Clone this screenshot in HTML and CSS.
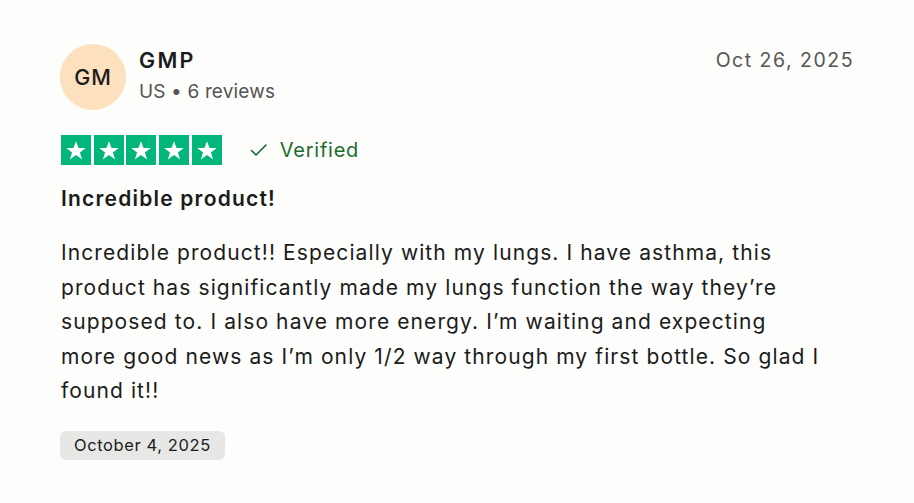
FILE: index.html
```html
<!DOCTYPE html>
<html lang="en">
<head>
<meta charset="utf-8">
<link rel="stylesheet" href="styles.css">
</head>
<body>
<article class="review">
  <header class="head">
    <div class="avatar">GM</div>
    <div class="who">
      <div class="name">GMP</div>
      <div class="meta">US • 6 reviews</div>
    </div>
    <time class="date">Oct 26, 2025</time>
  </header>
  <div class="rating">
    <div class="stars">
      <span class="star"><svg viewBox="0 0 24 24"><path d="M12 3.2l2.55 6.9h7.25l-5.85 4.3 2.2 7-6.15-4.4-6.15 4.4 2.2-7-5.85-4.3h7.25z"/></svg></span>
      <span class="star"><svg viewBox="0 0 24 24"><path d="M12 3.2l2.55 6.9h7.25l-5.85 4.3 2.2 7-6.15-4.4-6.15 4.4 2.2-7-5.85-4.3h7.25z"/></svg></span>
      <span class="star"><svg viewBox="0 0 24 24"><path d="M12 3.2l2.55 6.9h7.25l-5.85 4.3 2.2 7-6.15-4.4-6.15 4.4 2.2-7-5.85-4.3h7.25z"/></svg></span>
      <span class="star"><svg viewBox="0 0 24 24"><path d="M12 3.2l2.55 6.9h7.25l-5.85 4.3 2.2 7-6.15-4.4-6.15 4.4 2.2-7-5.85-4.3h7.25z"/></svg></span>
      <span class="star"><svg viewBox="0 0 24 24"><path d="M12 3.2l2.55 6.9h7.25l-5.85 4.3 2.2 7-6.15-4.4-6.15 4.4 2.2-7-5.85-4.3h7.25z"/></svg></span>
    </div>
    <div class="verified">
      <svg class="check" viewBox="0 0 20 20"><path d="M2.5 10.5l4.5 4.5 10-10" fill="none" stroke="currentColor" stroke-width="1.6" stroke-linecap="round" stroke-linejoin="round"/></svg>
      <span>Verified</span>
    </div>
  </div>
  <h2 class="title">Incredible product!</h2>
  <p class="body">Incredible product!! Especially with my lungs. I have asthma, this product has significantly made my lungs function the way they’re supposed to. I also have more energy. I’m waiting and expecting more good news as I’m only 1/2 way through my first bottle. So glad I found it!!</p>
  <div class="tag">October 4, 2025</div>
</article>
</body>
</html>
```

FILE: styles.css
```css
* { box-sizing: border-box; }
html, body {
  margin: 0;
  background: #fdfdfc;
}
body {
  font-family: Inter, "Noto Sans", "Liberation Sans", sans-serif;
  color: #1b1b1b;
}
.review {
  padding: 44px 61px 0 61px;
}
.head {
  display: flex;
  align-items: flex-start;
}
.avatar {
  width: 66px;
  height: 66px;
  border-radius: 50%;
  background: #fde0bd;
  color: #1b1b1b;
  display: flex;
  align-items: center;
  justify-content: center;
  font-size: 21.5px;
  font-weight: 500;
  letter-spacing: 1px;
  margin-left: -1px;
}
.who {
  margin-left: 13px;
  padding-top: 2px;
}
.name {
  font-size: 21.5px;
  font-weight: 600;
  line-height: 28px;
  letter-spacing: 2.3px;
}
.meta {
  font-size: 19px;
  color: #555;
  line-height: 24px;
  margin-top: 6px;
  letter-spacing: 0.15px;
}
.date {
  margin-left: auto;
  font-size: 19.5px;
  color: #555;
  line-height: 28px;
  padding-top: 2px;
  letter-spacing: 1.5px;
  margin-right: -1px;
}
.rating {
  display: flex;
  align-items: center;
  margin-top: 25px;
}
.stars {
  display: flex;
  gap: 2.7px;
}
.star {
  width: 30px;
  height: 30px;
  background: #00b67a;
  display: flex;
  align-items: center;
  justify-content: center;
}
.star svg {
  width: 24px;
  height: 24px;
  fill: #fff;
}
.verified {
  display: flex;
  align-items: center;
  margin-left: 27px;
  color: #1c6b2c;
  font-size: 20px;
  letter-spacing: 0.75px;
}
.check {
  width: 20px;
  height: 20px;
  margin-right: 11px;
}
.title {
  margin: 19px 0 0 0;
  font-size: 21px;
  font-weight: 600;
  line-height: 30px;
  letter-spacing: 1.2px;
}
.body {
  margin: 22px 0 0 0;
  font-size: 21px;
  line-height: 34.5px;
  letter-spacing: 1.1px;
  max-width: 762px;
}
.tag {
  display: inline-block;
  margin-top: 22px;
  margin-left: -1px;
  padding: 0 14px;
  height: 29px;
  line-height: 29px;
  background: #e7e7e6;
  border-radius: 6px;
  font-size: 16.5px;
  letter-spacing: 0.6px;
}
```
